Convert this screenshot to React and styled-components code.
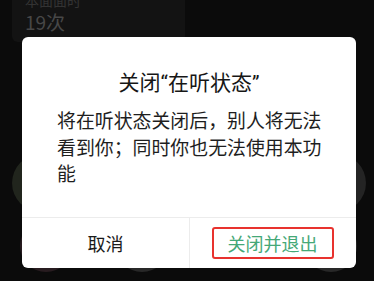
import React from "react";
import styled, { createGlobalStyle } from "styled-components";

const GlobalStyle = createGlobalStyle`
  html, body {
    margin: 0;
    padding: 0;
    background: #0b0b0b;
  }
  body {
    font-family: "Roboto", "Noto Sans CJK SC", sans-serif;
  }
`;

const Page = styled.div`
  position: relative;
  width: 374px;
  height: 281px;
  overflow: hidden;
  background: #0b0b0b;
`;

const Backdrop = styled.div`
  display: flex;
  flex-direction: column;
  padding: 0 0 0 12px;
`;

const StatCard = styled.div`
  width: 173px;
  height: 42px;
  background: #131313;
  border-radius: 0 0 6px 6px;
  padding: 0 0 0 13px;
  box-sizing: border-box;
  display: flex;
  flex-direction: column;
  justify-content: flex-end;
  overflow: hidden;
`;

const StatLabel = styled.div`
  color: #333333;
  font-size: 14px;
  line-height: 14px;
`;

const StatValue = styled.div`
  color: #474747;
  font-size: 19px;
  line-height: 28px;
  margin-bottom: 6px;
  font-family: "Noto Sans CJK SC", sans-serif;
`;

const IconRow = styled.div`
  display: flex;
  justify-content: space-between;
  margin-top: ${(p) => p.$top}px;
  padding: 0 ${(p) => p.$side}px 0 ${(p) => p.$left}px;
`;

const Bubble = styled.div`
  width: ${(p) => p.$size}px;
  height: ${(p) => p.$size}px;
  border-radius: 50%;
  background: ${(p) => p.$color};
`;

const Dialog = styled.div`
  position: absolute;
  left: 22px;
  top: 37px;
  width: 334px;
  height: 231px;
  background: #ffffff;
  border-radius: 6px;
  display: flex;
  flex-direction: column;
  overflow: hidden;
`;

const Title = styled.h2`
  margin: 0;
  padding-top: 32px;
  text-align: center;
  font-size: 21px;
  line-height: 28px;
  font-weight: 400;
  color: #161616;
`;

const Message = styled.p`
  margin: 12px 0 0;
  padding: 0 28px 0 35px;
  font-size: 18.9px;
  line-height: 26.5px;
  color: #1e1e1e;
  flex: 1;
`;

const Footer = styled.div`
  height: 50px;
  border-top: 1px solid #ececec;
  display: grid;
  grid-template-columns: 167px 1fr;
`;

const Action = styled.button`
  border: none;
  background: transparent;
  margin: 0;
  padding: 0;
  font-family: inherit;
  font-size: 18px;
  color: ${(p) => (p.$primary ? "#45a877" : "#1a1a1a")};
  display: flex;
  align-items: center;
  justify-content: center;
  border-left: ${(p) => (p.$primary ? "1px solid #ececec" : "none")};
  cursor: pointer;
`;

const Highlight = styled.span`
  display: inline-flex;
  align-items: center;
  justify-content: center;
  width: 122px;
  height: 32px;
  box-sizing: border-box;
  border: 2px solid #e8322e;
  border-radius: 3px;
  margin-left: -1px;
`;

export default function App() {
  return (
    <Page>
      <GlobalStyle />
      <Backdrop>
        <StatCard>
          <StatLabel>本面面时</StatLabel>
          <StatValue>19次</StatValue>
        </StatCard>
        <IconRow $top={112} $left={0} $side={8}>
          <Bubble $size={58} $color="#21251d" />
          <Bubble $size={58} $color="#1a1a1a" />
          <Bubble $size={58} $color="#1a1a1a" />
          <Bubble $size={58} $color="#242424" />
        </IconRow>
        <IconRow $top={8} $left={8} $side={17}>
          <Bubble $size={52} $color="#281c20" />
          <Bubble $size={52} $color="#282828" />
          <Bubble $size={48} $color="#1c1c1c" />
          <Bubble $size={52} $color="#282828" />
        </IconRow>
      </Backdrop>
      <Dialog>
        <Title>关闭“在听状态”</Title>
        <Message>将在听状态关闭后，别人将无法看到你；同时你也无法使用本功能</Message>
        <Footer>
          <Action>取消</Action>
          <Action $primary>
            <Highlight>关闭并退出</Highlight>
          </Action>
        </Footer>
      </Dialog>
    </Page>
  );
}
